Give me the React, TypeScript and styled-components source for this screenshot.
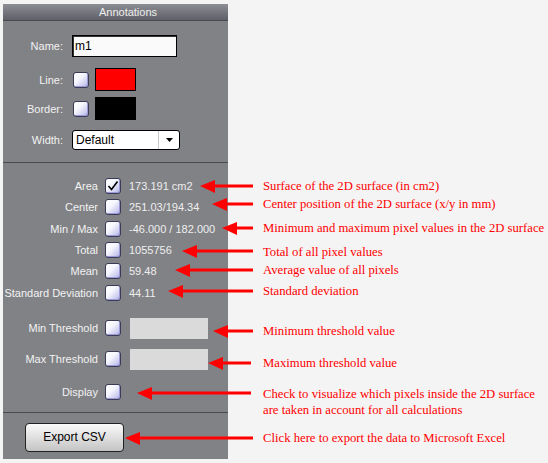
import styled, { createGlobalStyle } from 'styled-components';

const GlobalStyle = createGlobalStyle`
  html, body {
    margin: 0;
    padding: 0;
    background: #f4f4f4;
  }
  body {
    width: 548px;
    height: 463px;
    overflow: hidden;
  }
`;

type Stat = { label: string; value: string; checked?: boolean };

const STATS: Stat[] = [
  { label: 'Area', value: '173.191 cm2', checked: true },
  { label: 'Center', value: '251.03/194.34' },
  { label: 'Min / Max', value: '-46.000 / 182.000' },
  { label: 'Total', value: '1055756' },
  { label: 'Mean', value: '59.48' },
  { label: 'Standard Deviation', value: '44.11' },
];

// tip x, y, tail x -- arrows are drawn over the panel
const ARROWS = [
  { tip: 200, y: 186, end: 253 },
  { tip: 212, y: 204, end: 253 },
  { tip: 222, y: 228, end: 253 },
  { tip: 182, y: 251, end: 253 },
  { tip: 175, y: 270, end: 253 },
  { tip: 168, y: 291, end: 253 },
  { tip: 213, y: 331, end: 253 },
  { tip: 208, y: 363, end: 251 },
  { tip: 137, y: 393, end: 251 },
  { tip: 125, y: 438, end: 253 },
];

const NOTES = [
  { gap: 174, lines: ['Surface of the 2D surface (in cm2)'] },
  { gap: 2, lines: ['Center position of the 2D surface (x/y in mm)'] },
  { gap: 8, lines: ['Minimum and maximum pixel values in the 2D surface'] },
  { gap: 8, lines: ['Total of all pixel values'] },
  { gap: 2, lines: ['Average value of all pixels'] },
  { gap: 5, lines: ['Standard deviation'] },
  { gap: 24, lines: ['Minimum threshold value'] },
  { gap: 16, lines: ['Maximum threshold value'] },
  {
    gap: 15,
    lines: [
      'Check to visualize which pixels inside the 2D surface',
      'are taken in account for all calculations',
    ],
  },
  { gap: 12, lines: ['Click here to export the data to Microsoft Excel'] },
];

const CheckBox = ({ checked }: { checked?: boolean }) => (
  <Box>
    {checked && (
      <svg width="14" height="14" viewBox="0 0 14 14">
        <path d="M2.5 7 L5.5 10.5 L11.5 2.5" fill="none" stroke="#000" strokeWidth="1.6" />
      </svg>
    )}
  </Box>
);

const App = () => {
  return (
    <Page>
      <GlobalStyle />
      <Panel>
        <Header>Annotations</Header>
        <FieldRow $mt={14} $h={22}>
          <FieldLabel>Name:</FieldLabel>
          <NameInput>m1</NameInput>
        </FieldRow>
        <FieldRow $mt={11} $h={23}>
          <FieldLabel>Line:</FieldLabel>
          <Controls>
            <CheckBox />
            <Swatch $color="#ff0000" />
          </Controls>
        </FieldRow>
        <FieldRow $mt={6} $h={23}>
          <FieldLabel>Border:</FieldLabel>
          <Controls>
            <CheckBox />
            <Swatch $color="#000000" />
          </Controls>
        </FieldRow>
        <FieldRow $mt={10} $h={20}>
          <FieldLabel>Width:</FieldLabel>
          <Select>
            <span>Default</span>
            <SelectButton>
              <svg width="7" height="4" viewBox="0 0 7 4">
                <path d="M0 0 H7 L3.5 4 Z" fill="#000" />
              </svg>
            </SelectButton>
          </Select>
        </FieldRow>
        <Divider $mt={12} />
        <StatsSection>
          {STATS.map((s) => (
            <StatRow key={s.label}>
              <StatLabel>{s.label}</StatLabel>
              <CheckBox checked={s.checked} />
              <StatValue>{s.value}</StatValue>
            </StatRow>
          ))}
        </StatsSection>
        <ThresholdRow $mt={14.7}>
          <StatLabel>Min Threshold</StatLabel>
          <CheckBox />
          <ValueBox />
        </ThresholdRow>
        <ThresholdRow $mt={10}>
          <StatLabel>Max Threshold</StatLabel>
          <CheckBox />
          <ValueBox />
        </ThresholdRow>
        <ThresholdRow $mt={11.5}>
          <StatLabel>Display</StatLabel>
          <CheckBox />
        </ThresholdRow>
        <Divider $mt={9.5} />
        <ExportButton>Export CSV</ExportButton>
      </Panel>
      <Notes>
        {NOTES.map((n) => (
          <Note key={n.lines[0]} $gap={n.gap}>
            {n.lines.map((l) => (
              <div key={l}>{l}</div>
            ))}
          </Note>
        ))}
      </Notes>
      <ArrowLayer width="548" height="463" viewBox="0 0 548 463">
        {ARROWS.map((a) => (
          <g key={a.y} fill="#ff0000">
            <rect x={a.tip + 13} y={a.y - 1.5} width={a.end - a.tip - 13} height="3" />
            <polygon points={`${a.tip},${a.y} ${a.tip + 15},${a.y - 6} ${a.tip + 15},${a.y + 7}`} />
          </g>
        ))}
      </ArrowLayer>
    </Page>
  );
};

export default App;

const Page = styled.div`
  position: relative;
  display: flex;
  width: 548px;
  height: 463px;
  box-sizing: border-box;
  padding: 4px 0 0 3px;
`;

const Panel = styled.div`
  display: flex;
  flex-direction: column;
  flex: none;
  width: 225px;
  height: 455px;
  background: #818286;
  font-family: 'Liberation Sans', Arial, sans-serif;
  font-size: 11px;
  color: #f2f2f2;
`;

const Header = styled.div`
  display: flex;
  align-items: center;
  justify-content: center;
  height: 16px;
  padding-left: 25px;
  background: linear-gradient(#8e8f95, #5e5f67);
  border-bottom: 1px solid #4a4b50;
  color: #eeeeee;
`;

const FieldRow = styled.div<{ $mt: number; $h: number }>`
  display: grid;
  grid-template-columns: 60px auto;
  column-gap: 9px;
  align-items: center;
  height: ${(p) => p.$h}px;
  margin-top: ${(p) => p.$mt}px;
`;

const FieldLabel = styled.span`
  text-align: right;
`;

const Controls = styled.div`
  display: flex;
  align-items: center;
  gap: 6px;
  padding-left: 1px;
`;

const NameInput = styled.div`
  display: flex;
  align-items: center;
  width: 105px;
  height: 22px;
  box-sizing: border-box;
  padding-left: 2px;
  background: #fafafa;
  border: 1px solid #000;
  box-shadow: inset 1px 1px 0 #333;
  color: #000;
  font-size: 12px;
`;

const Swatch = styled.div<{ $color: string }>`
  width: 41px;
  height: 23px;
  box-sizing: border-box;
  background: ${(p) => p.$color};
  border: 1px solid #000;
`;

const Select = styled.div`
  display: flex;
  align-items: center;
  justify-content: space-between;
  width: 108px;
  height: 20px;
  box-sizing: border-box;
  padding-left: 3px;
  background: #fff;
  border: 1px solid #000;
  border-radius: 3px;
  color: #000;
  font-size: 12px;
`;

const SelectButton = styled.div`
  display: flex;
  align-items: center;
  justify-content: center;
  width: 20px;
  height: 100%;
  border-left: 1px solid #c8c8c8;
`;

const Box = styled.span`
  display: flex;
  align-items: center;
  justify-content: center;
  width: 16px;
  height: 16px;
  box-sizing: border-box;
  border: 1px solid #3b3b58;
  border-radius: 3px;
  background: linear-gradient(135deg, #ffffff 0%, #f6f6ff 40%, #b2b2e6 100%);
  box-shadow: inset -1px -1px 0 #9a9ad6;
`;

const Divider = styled.div<{ $mt: number }>`
  height: 1px;
  margin-top: ${(p) => p.$mt}px;
  background: #4a4b4f;
`;

const StatsSection = styled.div`
  display: flex;
  flex-direction: column;
  padding-top: 12.5px;
`;

const StatRow = styled.div`
  display: grid;
  grid-template-columns: 95px 16px auto;
  column-gap: 7px;
  align-items: center;
  height: 21.3px;
`;

const ThresholdRow = styled(StatRow)<{ $mt: number }>`
  height: 21px;
  margin-top: ${(p) => p.$mt}px;
`;

const StatLabel = styled.span`
  text-align: right;
  white-space: nowrap;
`;

const StatValue = styled.span`
  padding-left: 1px;
  white-space: nowrap;
  color: #eeeeee;
`;

const ValueBox = styled.div`
  width: 78px;
  height: 21px;
  margin-left: 2px;
  background: #dadada;
`;

const ExportButton = styled.div`
  display: flex;
  align-items: center;
  justify-content: center;
  width: 99px;
  height: 29px;
  box-sizing: border-box;
  margin: 10px 0 0 22px;
  border: 1px solid #222;
  border-radius: 4px;
  background: linear-gradient(#fafafa, #c4c4c4);
  color: #000;
  font-size: 12px;
`;

const Notes = styled.div`
  display: flex;
  flex-direction: column;
  margin-left: 35px;
  font-family: 'Liberation Serif', 'Times New Roman', serif;
  font-size: 12.7px;
  line-height: 16px;
  color: #ff0000;
  white-space: nowrap;
`;

const Note = styled.div<{ $gap: number }>`
  margin-top: ${(p) => p.$gap}px;
`;

const ArrowLayer = styled.svg`
  position: absolute;
  top: 0;
  left: 0;
  pointer-events: none;
`;
